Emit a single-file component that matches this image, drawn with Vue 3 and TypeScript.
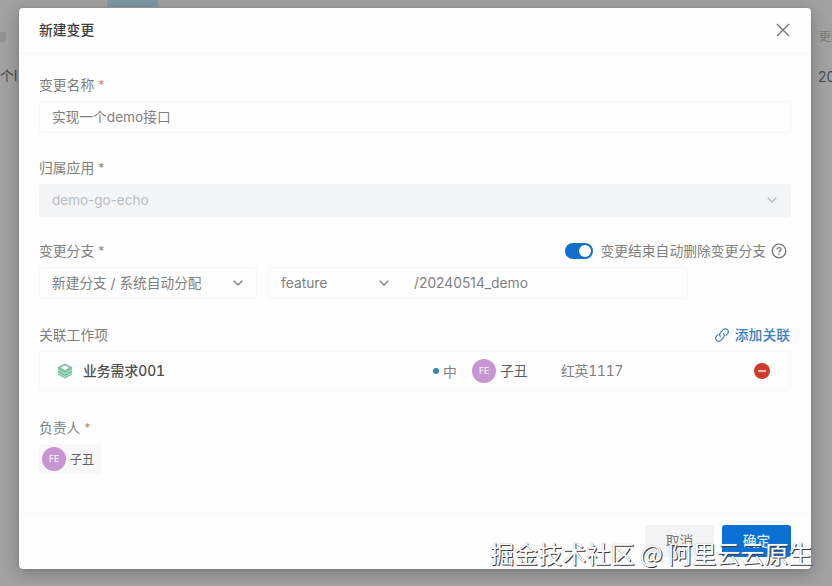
<script setup lang="ts">
import { ref } from 'vue'

const changeName = ref('实现一个demo接口')
const autoDelete = ref(true)
const branchSuffix = ref('/20240514_demo')
const owner = '子丑'
const workItem = { title: '业务需求001', priority: '中', sprint: '红英1117' }
</script>

<template>
  <div class="page">
    <div class="active-tab"></div>
    <div class="backdrop-dot"></div>
    <span class="behind behind-left">个I</span>
    <span class="behind behind-head">更新</span>
    <span class="behind behind-date">2024</span>

    <section class="modal" role="dialog">
      <header class="modal-head">
        <h1>新建变更</h1>
        <svg class="close" viewBox="0 0 14 14"><path d="M1 1 13 13M13 1 1 13" /></svg>
      </header>

      <div class="modal-body">
        <div class="label">变更名称<i class="star red">*</i></div>
        <div class="input full"><span class="t-name">{{ changeName }}</span></div>

        <div class="label">归属应用<i class="star">*</i></div>
        <div class="input full disabled">
          <span class="t-app">demo-go-echo</span>
          <svg class="chevron" viewBox="0 0 10 6"><path d="M.7.7 5 5 9.3.7" /></svg>
        </div>

        <div class="label">
          变更分支<i class="star">*</i>
          <div class="auto-delete">
            <span class="switch" :class="{ on: autoDelete }"></span>
            <span class="auto-text">变更结束自动删除变更分支</span>
            <svg class="help" viewBox="0 0 16 16">
              <circle cx="8" cy="8" r="6.8" />
              <path d="M6 6.5C6 4 10 4 10 6.4 10 8 8 7.8 8 9.5" />
              <path d="M8 10.6v1.3" />
            </svg>
          </div>
        </div>
        <div class="branch-row">
          <div class="input kind">
            <span class="t-kind">新建分支 / 系统自动分配</span>
            <svg class="chevron" viewBox="0 0 10 6"><path d="M.7.7 5 5 9.3.7" /></svg>
          </div>
          <div class="input composed">
            <div class="prefix">
              <span class="t-prefix">feature</span>
              <svg class="chevron" viewBox="0 0 10 6"><path d="M.7.7 5 5 9.3.7" /></svg>
            </div>
            <span class="t-suffix">{{ branchSuffix }}</span>
          </div>
        </div>

        <div class="label">
          关联工作项
          <a class="add">
            <svg class="link" viewBox="0 0 16 16">
              <path d="M6.7 9.6C5.3 8.2 5.4 6.5 6.6 5.3L9.2 2.7C10.4 1.5 12.2 1.5 13.4 2.7 14.6 3.9 14.5 5.6 13.4 6.8L11.6 8.6" />
              <path d="M9.3 6.4C10.7 7.8 10.6 9.5 9.4 10.7L6.8 13.3C5.6 14.5 3.8 14.5 2.6 13.3 1.4 12.1 1.5 10.4 2.6 9.2L4.4 7.4" />
            </svg>
            <span>添加关联</span>
          </a>
        </div>
        <div class="work-item">
          <svg class="layers" viewBox="0 0 16 16">
            <path class="solid" d="M8 .5 15 4V11.7L8 15.5 1 11.7V4Z" />
            <path class="top" d="M8 2.6 12.2 4.7 8 6.9 3.8 4.7Z" />
            <path class="cut" d="M1 7.2 8 10.6 15 7.2M1 10.2 8 13.6 15 10.2" />
          </svg>
          <span class="item-title">{{ workItem.title }}</span>
          <span class="priority"><i class="bullet"></i>{{ workItem.priority }}</span>
          <span class="avatar">FE</span>
          <span class="assignee">{{ owner }}</span>
          <span class="sprint">{{ workItem.sprint }}</span>
          <svg class="remove" viewBox="0 0 16 16"><circle cx="8" cy="8" r="8" /><path d="M4 8h8" /></svg>
        </div>

        <div class="label">负责人<i class="star red">*</i></div>
        <div class="owner"><span class="avatar">FE</span><span class="owner-name">{{ owner }}</span></div>
      </div>

      <footer class="modal-foot">
        <button class="btn">取消</button>
        <button class="btn primary">确定</button>
      </footer>
    </section>

    <div class="watermark">掘金技术社区 @ 阿里云云原生</div>
  </div>
</template>

<style>
body {
  background: #a0a0a0;
  overflow: hidden;
}
</style>

<style scoped>
.page {
  position: relative;
  box-sizing: border-box;
  width: 832px;
  height: 586px;
  padding: 8px 21px 17px 19px;
  overflow: hidden;
  background: #a1a1a1;
  font-family: Inter, "Noto Sans CJK SC", sans-serif;
  font-size: 13.8px;
  color: #808080;
}
.active-tab {
  position: absolute;
  left: 107px;
  top: 0;
  width: 51px;
  height: 7px;
  background: #7e98a5;
}
.backdrop-dot {
  position: absolute;
  left: -4px;
  top: 32px;
  width: 10px;
  height: 10px;
  border-radius: 3px;
  background: #929292;
}
.behind {
  position: absolute;
  line-height: 20px;
  white-space: nowrap;
  color: #4c4c4c;
}
.behind-left { left: 0; top: 66px; }
.behind-head { left: 819px; top: 27px; font-size: 12px; color: #7b7b7b; }
.behind-date { left: 818px; top: 67px; }
.modal {
  position: relative;
  display: flex;
  flex-direction: column;
  box-sizing: border-box;
  height: 561px;
  border-radius: 4px;
  background: #fefefe;
  box-shadow: 0 4px 16px rgba(0, 0, 0, 0.26), 0 0 2px rgba(0, 0, 0, 0.12);
}
.modal-head {
  display: flex;
  justify-content: space-between;
  align-items: center;
  box-sizing: border-box;
  height: 46px;
  padding: 0 21px 0 20px;
  border-bottom: 1px solid #f8f8f8;
}
h1 {
  margin: 0;
  padding-bottom: 2px;
  font-size: 13.8px;
  font-weight: 500;
  line-height: 20px;
  color: #3d3d3d;
}
svg {
  display: block;
  flex: none;
  fill: none;
  stroke: currentColor;
}
.close {
  width: 14px;
  height: 14px;
  margin-top: -2px;
  color: #777;
  stroke-width: 1.4;
}
.modal-body {
  flex: 1;
  padding: 20px 20px 0;
}
.label {
  display: flex;
  align-items: center;
  height: 20px;
  margin-bottom: 7px;
  color: #7e7e7e;
}
.star {
  margin-left: 4px;
  font-size: 12px;
  font-style: normal;
  color: #888;
}
.star.red { color: #db7a80; }
.input {
  display: flex;
  align-items: center;
  justify-content: space-between;
  box-sizing: border-box;
  height: 32px;
  padding: 0 14px 0 12px;
  border: 1px solid #f7f7f7;
  border-radius: 3px;
  color: #808080;
  white-space: nowrap;
}
.t-name, .t-kind, .t-app { padding-bottom: 2px; }
.t-name, .t-kind, .t-app { font-size: 13.7px; }
.full { margin-bottom: 24px; }
.disabled {
  height: 33px;
  margin-bottom: 23px;
  padding-right: 13px;
  border-color: #f3f5f7;
  background: #f3f5f7;
  color: #b9bdc1;
}
.t-app { font-size: 13.5px; }
.chevron {
  width: 10px;
  height: 6px;
  stroke-width: 1.4;
}
.disabled .chevron { margin-bottom: 1px; }
.auto-delete {
  display: flex;
  align-items: center;
  margin-left: auto;
  padding-right: 4px;
}
.switch {
  box-sizing: border-box;
  width: 28px;
  height: 16px;
  margin-top: 2px;
  padding: 2px;
  border-radius: 8px;
  background: #bbb;
}
.switch::after {
  content: "";
  display: block;
  width: 12px;
  height: 12px;
  border-radius: 50%;
  background: #fff;
}
.switch.on { background: #1070cc; }
.switch.on::after { margin-left: auto; }
.auto-text { margin: 0 5px 0 7px; }
.help {
  width: 16px;
  height: 16px;
  margin-top: 2px;
  stroke-width: 1.3;
  color: #777;
}
.branch-row {
  display: flex;
  gap: 11px;
  margin-bottom: 25px;
}
.kind { width: 218px; padding-right: 13px; }
.composed {
  width: 420px;
  justify-content: flex-start;
  padding-right: 0;
}
.prefix {
  display: flex;
  align-items: center;
  justify-content: space-between;
  width: 108px;
  margin-right: 25px;
}
.add {
  display: flex;
  align-items: center;
  gap: 5px;
  margin-left: auto;
  padding-right: 1px;
  color: #397fc1;
  font-weight: 500;
}
.link {
  width: 16px;
  height: 16px;
  margin-top: 1px;
  stroke-width: 1.2;
}
.work-item {
  display: flex;
  align-items: center;
  box-sizing: border-box;
  height: 40px;
  margin-bottom: 26px;
  padding: 0 20px 0 18px;
  border: 1px solid #f8f8f8;
  border-radius: 3px;
}
.layers {
  width: 16px;
  height: 16px;
  margin: 0 10px 0 -1px;
  stroke: none;
}
.layers .solid { fill: #7bc6a0; }
.layers .top { fill: #fff; }
.layers .cut { stroke: #c2e6d2; stroke-width: 0.8; }
.item-title {
  width: 350px;
  padding-bottom: 2px;
  font-weight: 500;
  font-feature-settings: "tnum";
  color: #4e4e4e;
}
.priority {
  display: flex;
  align-items: center;
  width: 39px;
  padding-bottom: 1px;
}
.bullet {
  width: 6px;
  height: 6px;
  margin-right: 4px;
  border-radius: 50%;
  background: #2f8abb;
}
.avatar {
  display: flex;
  align-items: center;
  justify-content: center;
  width: 24px;
  height: 24px;
  margin-right: 4px;
  border-radius: 50%;
  background: #c795d4;
  color: #f5e9f8;
  font-size: 8.5px;
  font-weight: 600;
}
.assignee {
  width: 61px;
  padding-bottom: 2px;
  color: #5c5c5c;
}
.sprint {
  padding-bottom: 2px;
  font-feature-settings: "tnum";
  letter-spacing: -0.2px;
}
.remove {
  width: 16px;
  height: 16px;
  margin-left: auto;
}
.remove circle { fill: #cd3d2e; stroke: none; }
.remove path { stroke: #f8ddd9; stroke-width: 1.6; }
.owner {
  display: flex;
  align-items: center;
  box-sizing: border-box;
  width: 63px;
  height: 30px;
  padding: 0 0 0 3px;
  border-radius: 3px;
  background: #f8f8f9;
  font-size: 12px;
  color: #606060;
}
.owner-name { padding-bottom: 2px; }
.modal-foot {
  display: flex;
  justify-content: flex-end;
  gap: 8px;
  box-sizing: border-box;
  height: 56px;
  padding: 11px 20px 0;
  border-top: 1px solid #f8f8f8;
}
.btn {
  width: 69px;
  height: 32px;
  padding: 0 0 2px;
  border: 0;
  border-radius: 3px;
  background: #f2f3f4;
  font: inherit;
  color: #777;
}
.primary {
  background: #0b70d4;
  font-weight: 500;
  color: #d6e9fb;
}
.watermark {
  position: absolute;
  left: 490px;
  top: 536px;
  font-family: "Noto Sans CJK SC", sans-serif;
  font-size: 24.1px;
  line-height: 34px;
  white-space: nowrap;
  color: #fff;
  text-shadow: 1px 1px 0 #3a3a3a, 0 0 1px #999;
}
</style>
